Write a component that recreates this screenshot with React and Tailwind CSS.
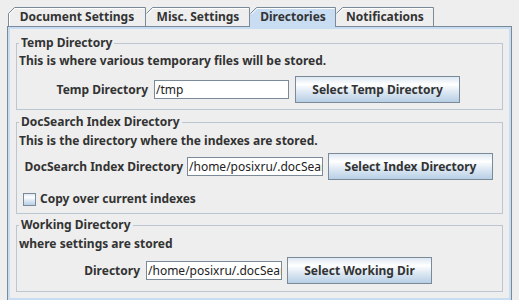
import React from "react";

const grad =
  "bg-[linear-gradient(to_bottom,#dde8f3_0%,#ffffff_30%,#dde8f3_60%,#b8cfe5_100%)]";

function Tab({ w, cls, label, selected, first }) {
  const H = selected ? 20 : 19;
  const fill = selected ? "#c8ddf2" : "#eeeeee";
  const r = w - 0.5;
  const outline = first
    ? `M0.5 ${H} V6.5 L6.5 0.5 H${r} V${H}`
    : `M0.5 6.5 L6.5 0.5 H${r} V${H}`;
  const hl = first
    ? `M1.5 ${H} V7 L7 1.5 H${r - 1}`
    : `M1.5 7 L7 1.5 H${r - 1}`;
  const poly = first
    ? `0,${H} 0,6.5 6.5,0 ${w},0 ${w},${H}`
    : `0,${H} 0,7 7,0 ${w},0 ${w},${H}`;
  return (
    <div
      className={`relative flex items-center justify-center ${cls} ${
        selected ? "h-[20px] z-10 -mb-[1px] pb-[1px]" : "h-[19px]"
      }`}
    >
      <svg
        className="absolute left-0 top-0"
        width={w}
        height={H}
        viewBox={`0 0 ${w} ${H}`}
      >
        <polygon points={poly} fill={fill} />
        <path d={hl} fill="none" stroke="#ffffff" strokeWidth="1" />
        <path d={outline} fill="none" stroke="#7a8a99" strokeWidth="1" />
      </svg>
      <span className="relative font-bold whitespace-nowrap">{label}</span>
    </div>
  );
}

function Field({ cls, value }) {
  return (
    <input
      readOnly
      value={value}
      className={`h-[19px] ${cls} border border-[#7a8a99] bg-white pl-[1px] pr-0 text-[12px] font-normal text-[#222222] outline-none`}
    />
  );
}

function Btn({ cls, children }) {
  return (
    <button
      className={`h-[27px] ${cls} border border-[#7a8a99] ${grad} text-[12px] font-bold text-[#333333] leading-[16px] whitespace-nowrap`}
    >
      {children}
    </button>
  );
}

export default function App() {
  return (
    <div className="w-[519px] h-[300px] overflow-hidden bg-[#eeeeee] font-['Noto_Sans',sans-serif] text-[12px] leading-[16px] text-[#333333]">
      <div className="flex items-end pl-[8px] pt-[7px]">
        <Tab first w={138} cls="w-[138px]" label="Document Settings" />
        <Tab w={104} cls="w-[104px]" label="Misc. Settings" />
        <Tab selected w={86} cls="w-[86px]" label="Directories" />
        <Tab w={98} cls="w-[98px]" label="Notifications" />
      </div>
      <div className="ml-[7px] w-[505px] border border-[#7a8a99] bg-[#c8ddf2] p-[2px]">
        <div className="bg-[#eeeeee] px-[6px] pt-[6px] pb-[6px]">
          <fieldset className="border border-[#bcc6d0] px-[2px] pb-[6px]">
            <legend className="px-[2px] font-bold leading-[16px]">
              Temp Directory
            </legend>
            <div className="mt-[2px] font-bold whitespace-nowrap">
              This is where various temporary files will be stored.
            </div>
            <div className="mt-[7px] flex items-center h-[27px]">
              <div className="w-[129px] text-right font-bold whitespace-nowrap">
                Temp Directory
              </div>
              <Field cls="ml-[6px] w-[135px]" value="/tmp" />
              <Btn cls="ml-[6px] w-[165px]">Select Temp Directory</Btn>
            </div>
          </fieldset>

          <fieldset className="mt-[4px] border border-[#bcc6d0] px-[2px] pb-[6px]">
            <legend className="px-[2px] font-bold leading-[16px]">
              DocSearch Index Directory
            </legend>
            <div className="mt-[3px] font-bold whitespace-nowrap">
              This is the directory where the indexes are stored.
            </div>
            <div className="mt-[4px] flex items-center h-[27px]">
              <div className="w-[164px] text-right font-bold whitespace-nowrap">
                DocSearch Index Directory
              </div>
              <Field
                cls="ml-[4px] w-[136px]"
                value="/home/posixru/.docSearch"
              />
              <Btn cls="ml-[5px] w-[165px]">Select Index Directory</Btn>
            </div>
            <div className="mt-[11px] flex items-center h-[16px] pl-[4px]">
              <span
                className={`block w-[13px] h-[13px] border border-[#7a8a99] ${grad}`}
              />
              <span className="ml-[4px] font-bold whitespace-nowrap">
                Copy over current indexes
              </span>
            </div>
          </fieldset>

          <fieldset className="mt-[3px] border border-[#bcc6d0] px-[2px] pb-[7px]">
            <legend className="px-[2px] font-bold leading-[16px]">
              Working Directory
            </legend>
            <div className="mt-[3px] font-bold whitespace-nowrap">
              where settings are stored
            </div>
            <div className="mt-[5px] flex items-center h-[27px]">
              <div className="w-[121px] text-right font-bold whitespace-nowrap">
                Directory
              </div>
              <Field
                cls="ml-[6px] w-[136px]"
                value="/home/posixru/.docSearch"
              />
              <Btn cls="ml-[5px] w-[145px]">Select Working Dir</Btn>
            </div>
          </fieldset>
        </div>
      </div>
    </div>
  );
}
